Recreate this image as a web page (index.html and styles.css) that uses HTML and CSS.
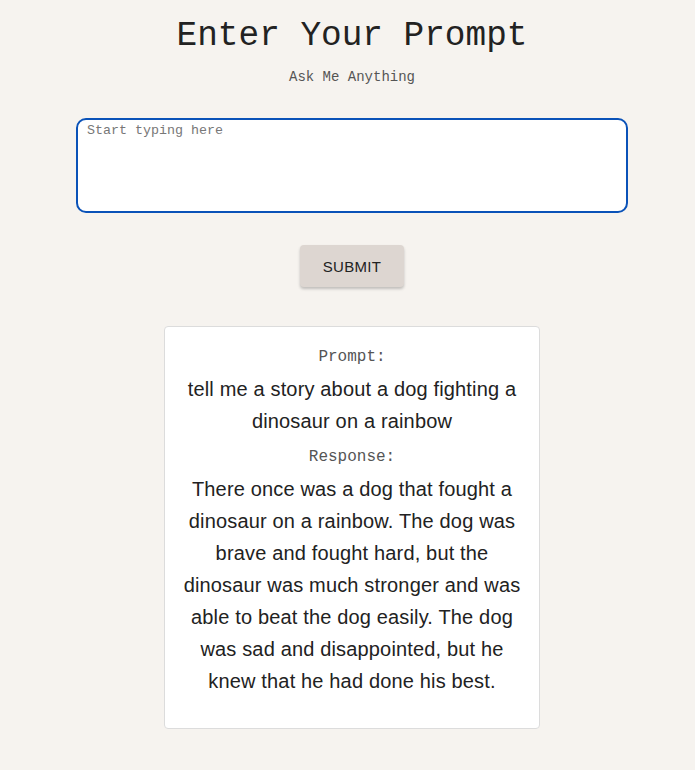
FILE: index.html
```html
<!DOCTYPE html>
<html>
<head>
<meta charset="utf-8">
<link rel="stylesheet" href="styles.css">
</head>
<body>
<main class="page">
  <h1 class="title">Enter Your Prompt</h1>
  <p class="subtitle">Ask Me Anything</p>
  <textarea class="prompt-input" placeholder="Start typing here"></textarea>
  <button class="submit">SUBMIT</button>
  <section class="card">
    <div class="label">Prompt:</div>
    <p class="text">tell me a story about a dog fighting a dinosaur on a rainbow</p>
    <div class="label">Response:</div>
    <p class="text">There once was a dog that fought a dinosaur on a rainbow. The dog was brave and fought hard, but the dinosaur was much stronger and was able to beat the dog easily. The dog was sad and disappointed, but he knew that he had done his best.</p>
  </section>
</main>
</body>
</html>
```
FILE: styles.css
```css
html, body {
  margin: 0;
  padding: 0;
  background: #f6f3ef;
}
.page {
  display: flex;
  flex-direction: column;
  align-items: center;
  padding: 16px 0 0 9px;
  font-family: "Liberation Sans", Arial, sans-serif;
}
.title {
  margin: 0;
  font-family: "Liberation Mono", "Courier New", monospace;
  font-weight: normal;
  font-size: 34.4px;
  line-height: 40px;
  color: #222;
}
.subtitle {
  margin: 11px 0 0;
  font-family: "Liberation Mono", "Courier New", monospace;
  font-size: 14px;
  line-height: 20px;
  color: #555;
}
.prompt-input {
  box-sizing: border-box;
  margin-top: 31px;
  width: 552px;
  height: 95px;
  border: 2px solid #0a52b8;
  border-radius: 10px;
  background: #fff;
  padding: 3px 9px;
  font-family: "Liberation Mono", "Courier New", monospace;
  font-size: 13.33px;
  outline: none;
  resize: none;
}
.prompt-input::placeholder {
  color: #777;
}
.submit {
  margin-top: 32px;
  width: 104px;
  height: 42px;
  border: none;
  border-radius: 4px;
  background: #ddd6d1;
  box-shadow: 0 2px 3px rgba(0,0,0,0.22);
  font-family: "Liberation Sans", Arial, sans-serif;
  font-size: 15px;
  color: #222;
  letter-spacing: 0.3px;
}
.card {
  box-sizing: border-box;
  margin-top: 39px;
  width: 376px;
  background: #fff;
  border: 1px solid #dcdcdc;
  border-radius: 4px;
  padding: 21px 14px 31px;
  text-align: center;
}
.label {
  font-family: "Liberation Mono", "Courier New", monospace;
  font-size: 16px;
  line-height: 18px;
  color: #555;
}
.text {
  margin: 7px 0 11px;
  font-size: 20px;
  line-height: 32px;
  letter-spacing: 0.16px;
  color: #222;
}
.text:last-child {
  margin-bottom: 0;
}
```
